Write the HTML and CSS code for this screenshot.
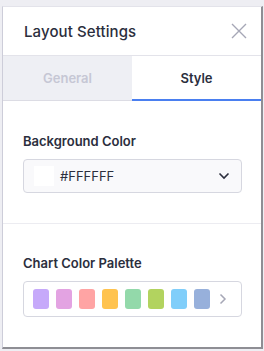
FILE: index.html
```html
<!DOCTYPE html>
<html lang="en">
<head>
    <meta charset="UTF-8">
    <meta name="viewport" content="width=device-width, initial-scale=1.0">
    <title>Layout Settings</title>
    <link rel="stylesheet" href="styles.css">
</head>
<body>
    <div class="panel">
        <header class="panel-header">
            <h2>Layout Settings</h2>
            <button class="close-btn" aria-label="Close">
                <svg width="16" height="16" viewBox="0 0 16 16">
                    <path d="M1 1 L15 15 M15 1 L1 15" stroke="#a6a7b6" stroke-width="1.4" fill="none"/>
                </svg>
            </button>
        </header>

        <nav class="tabs">
            <div class="tab">General</div>
            <div class="tab active">Style</div>
        </nav>

        <section class="field">
            <label class="field-label">Background Color</label>
            <div class="select">
                <span class="swatch-white"></span>
                <span class="select-value">#FFFFFF</span>
                <svg class="chevron" width="12" height="8" viewBox="0 0 12 8">
                    <path d="M1.5 1.5 L6 6 L10.5 1.5" stroke="#2b2e3d" stroke-width="1.6" fill="none"/>
                </svg>
            </div>
        </section>

        <section class="field field-palette">
            <label class="field-label">Chart Color Palette</label>
            <div class="palette">
                <span class="chip" style="background:#c6a9fa"></span>
                <span class="chip" style="background:#e3a3e2"></span>
                <span class="chip" style="background:#ffa4a4"></span>
                <span class="chip" style="background:#ffc34f"></span>
                <span class="chip" style="background:#93d9aa"></span>
                <span class="chip" style="background:#b2d35f"></span>
                <span class="chip" style="background:#80cefa"></span>
                <span class="chip" style="background:#97b0db"></span>
                <svg class="next" width="8" height="12" viewBox="0 0 8 12">
                    <path d="M1.5 1.5 L6 6 L1.5 10.5" stroke="#a6a7b6" stroke-width="1.5" fill="none"/>
                </svg>
            </div>
        </section>
    </div>
</body>
</html>
```

FILE: styles.css
```css
* {
    margin: 0;
    padding: 0;
    box-sizing: border-box;
}

body {
    font-family: Inter, "Noto Sans", sans-serif;
    background: #eeeef3;
    color: #2b2e3d;
    width: 264px;
    height: 351px;
    overflow: hidden;
}

.panel {
    margin: 6px 0 0 2px;
    width: 261px;
    height: 343px;
    background: #fff;
    border-top: 1px solid #e3e3ea;
    border-left: 1px solid #cdcdd9;
    border-right: 2px solid #8e8e94;
    border-bottom: 2px solid #8e8e94;
}

.panel-header {
    height: 49px;
    display: flex;
    align-items: center;
    justify-content: space-between;
    padding: 0 14px 0 21px;
    border-bottom: 1px solid #e3e3ea;
}

.panel-header h2 {
    font-size: 15px;
    font-weight: 500;
    letter-spacing: 0.1px;
}

.close-btn {
    border: none;
    background: none;
    display: flex;
}

.tabs {
    display: flex;
    height: 45px;
}

.tab {
    flex: 1;
    display: flex;
    align-items: center;
    justify-content: center;
    font-size: 13px;
    font-weight: 600;
    color: #c6c7d4;
    background: #eeeff4;
    border-bottom: 1px solid #dcdce4;
}

.tab.active {
    background: #fff;
    color: #2b2e3d;
    border-bottom: 2px solid #4a7ff0;
}

.field {
    padding: 32px 19px 30px 20px;
    border-bottom: 1px solid #ececf1;
}

.field-palette {
    border-bottom: none;
    padding-top: 31px;
}

.field-label {
    display: block;
    font-size: 13px;
    font-weight: 600;
    margin-bottom: 10px;
}

.select {
    height: 34px;
    display: flex;
    align-items: center;
    padding: 0 11px 0 10px;
    background: #f9f9fb;
    border: 1px solid #d6d7e0;
    border-radius: 4px;
}

.swatch-white {
    width: 20px;
    height: 20px;
    background: #fff;
    margin-right: 6px;
}

.select-value {
    flex: 1;
    font-size: 13px;
}

.palette {
    height: 36px;
    display: flex;
    align-items: center;
    gap: 7px;
    padding: 0 14px 0 9px;
    border: 1px solid #d6d7e0;
    border-radius: 4px;
}

.chip {
    width: 16px;
    height: 20px;
    border-radius: 3px;
}

.next {
    margin-left: auto;
}
```
